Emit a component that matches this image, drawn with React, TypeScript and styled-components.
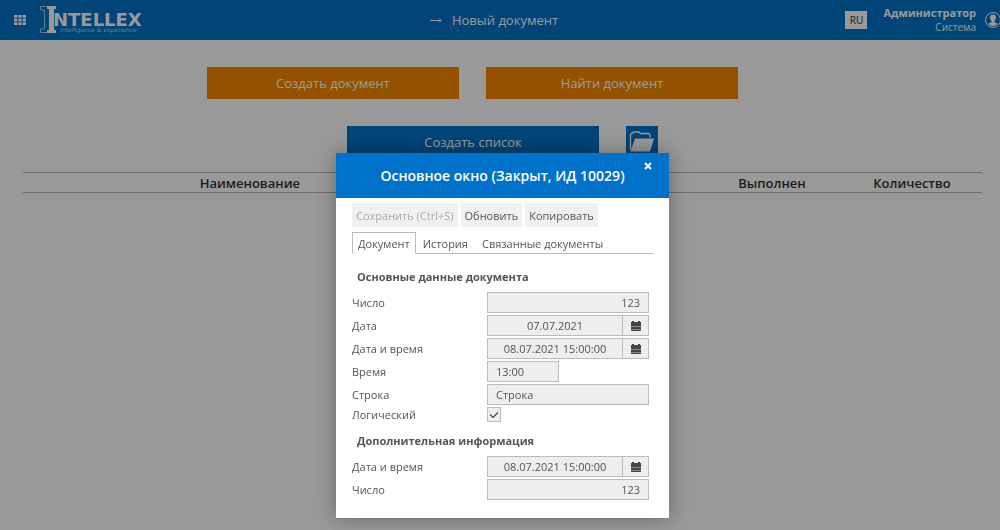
import React from "react";
import styled, { createGlobalStyle } from "styled-components";

const GlobalStyle = createGlobalStyle`
  * { box-sizing: border-box; }
  body {
    margin: 0;
    background: #fff;
    font-family: "Open Sans", "Noto Sans", sans-serif;
    font-size: 13px;
    color: #333;
  }
  button, input { font: inherit; color: inherit; margin: 0; }
`;

const TopBar = styled.header`
  display: grid;
  grid-template-columns: 1fr auto 1fr;
  align-items: center;
  height: 40px;
  background: #0072c9;
  color: #fff;
  overflow: hidden;
`;

const Brand = styled.div`
  display: flex;
  align-items: center;
  gap: 14px;
  padding-left: 14px;
`;

const IconButton = styled.button`
  display: flex;
  padding: 0;
  border: 0;
  background: none;
  color: #fff;
  cursor: pointer;
`;

const PageTitle = styled.h1`
  display: flex;
  align-items: center;
  gap: 10px;
  margin: 0;
  padding-right: 12px;
  font-size: 13px;
  font-weight: 400;
  line-height: 18px;
`;

const Account = styled.div`
  display: flex;
  align-items: center;
  justify-content: flex-end;
`;

const Language = styled.button`
  width: 22px;
  height: 18px;
  margin-right: 16px;
  padding: 0;
  border: 0;
  background: #fff;
  color: #333;
  font-size: 10px;
  line-height: 18px;
`;

const UserName = styled.div`
  margin-right: 9px;
  text-align: right;
  font-size: 10px;
  line-height: 14px;

  strong {
    display: block;
    font-size: 11px;
    font-weight: 700;
  }
`;

const Page = styled.main`
  padding: 27px 18px 0 23px;
`;

const Actions = styled.div<{ $reserve?: boolean }>`
  display: flex;
  justify-content: center;
  gap: 27px;
  margin-bottom: 27px;
  padding-right: ${(p) => (p.$reserve ? 60 : 0)}px;
`;

const ActionButton = styled.button<{ $tone: "orange" | "blue" }>`
  width: 252px;
  height: 32px;
  padding: 0;
  border: 0;
  background: ${(p) => (p.$tone === "orange" ? "#f78900" : "#0072c9")};
  color: #fff;
  cursor: pointer;
`;

const FolderButton = styled(ActionButton)`
  display: flex;
  align-items: center;
  justify-content: center;
  width: 32px;
`;

const ListTable = styled.table`
  width: 100%;
  margin-top: -13px;
  table-layout: fixed;
  border-collapse: collapse;

  th {
    height: 20px;
    padding: 0;
    border-top: 1px solid #bbb;
    border-bottom: 1px solid #bbb;
    font-weight: 600;
    line-height: 18px;
  }
`;

const Backdrop = styled.div`
  position: fixed;
  inset: 0;
  display: flex;
  justify-content: center;
  align-items: flex-start;
  padding: 153px 0 0 5px;
  background: rgba(0, 0, 0, 0.4);
`;

const Dialog = styled.section`
  width: 333px;
  background: #fff;
  color: #555;
  font-size: 11px;
  box-shadow: 0 0 20px rgba(0, 0, 0, 0.35);
`;

const DialogHeader = styled.header`
  position: relative;
  display: flex;
  align-items: center;
  justify-content: center;
  height: 45px;
  background: #0072c9;
  color: #fff;

  h2 {
    margin: 0;
    font-size: 14px;
    font-weight: 600;
  }
`;

const CloseButton = styled(IconButton)`
  position: absolute;
  top: 9px;
  right: 17px;
`;

const DialogBody = styled.div`
  padding: 5px 16px 18px;
`;

const Toolbar = styled.div`
  display: flex;
  gap: 3px;
`;

const ToolButton = styled.button`
  height: 24px;
  padding: 0 4px;
  border: 0;
  background: #f1f1f1;

  &:disabled { color: #aaa; }
`;

const Tabs = styled.div`
  display: flex;
  margin: 5px 0 4px;
  border-bottom: 1px solid #bbb;
`;

const Tab = styled.button<{ $active?: boolean }>`
  height: 22px;
  margin-bottom: -1px;
  border: 1px solid ${(p) => (p.$active ? "#bbb" : "transparent")};
  border-bottom-color: ${(p) => (p.$active ? "#fff" : "transparent")};
  background: ${(p) => (p.$active ? "#fff" : "transparent")};
  padding: 0 ${(p) => (p.$active ? 5 : 6)}px;
`;

const Group = styled.fieldset`
  margin: 0;
  padding: 0;
  border: 0;
  min-width: 0;

  legend {
    padding: 10px 5px 7px;
    font-weight: 700;
    line-height: 17px;
  }
`;

const Fields = styled.div`
  display: grid;
  gap: 2px;
  padding-right: 4px;
`;

const FieldRow = styled.div`
  display: grid;
  grid-template-columns: 135px 1fr;
  align-items: center;

  label { line-height: 15px; }
`;

const TextInput = styled.input<{ $align?: string; $narrow?: boolean }>`
  width: ${(p) => (p.$narrow ? "72px" : "100%")};
  min-width: 0;
  height: 21px;
  padding: 0 8px;
  border: 1px solid #bbb;
  border-radius: 0;
  background: #eee;
  text-align: ${(p) => p.$align || "left"};
  outline: 0;
`;

const DateBox = styled.div`
  display: grid;
  grid-template-columns: 1fr 26px;
`;

const CalendarButton = styled.button`
  display: flex;
  align-items: center;
  justify-content: center;
  padding: 0;
  border: 1px solid #bbb;
  border-left: 0;
  background: #eee;
`;

const CheckBox = styled.input`
  display: block;
  width: 14px;
  height: 15px;
  appearance: none;
  border: 1px solid #bbb;
  background: #eee;
`;

const CheckCell = styled.div`
  display: grid;
  justify-content: start;

  > * { grid-area: 1 / 1; }
  svg { pointer-events: none; }
`;

const AppsIcon = () => (
  <svg width="12" height="10" viewBox="0 0 12 10" fill="currentColor" aria-hidden="true">
    {[0, 3.7, 7.3].map((y) => [0, 4.3, 8.6].map((x) => <rect key={`${x}-${y}`} x={x} y={y} width="3.4" height="2.7" />))}
  </svg>
);

const Logo = () => (
  <svg width="104" height="28" viewBox="0 0 104 28" role="img" aria-label="Intellex">
    <path d="M7 .5H.5V4H4.500V23H.5V26.500H7" fill="none" stroke="#a9cdea" />
    <path d="M7 0h9v3h-2v21h2v3H7v-3h2V3H7Z" fill="#fff" />
    <text x="13" y="20" fill="#fff" fontFamily="DejaVu Sans" fontSize="18" fontWeight="700">NTELLEX</text>
    <text x="20" y="26" fill="#a9cdea" fontFamily="DejaVu Sans" fontSize="6">intelligence &amp; experience</text>
  </svg>
);

const ArrowIcon = () => (
  <svg width="12" height="7" viewBox="0 0 12 7" fill="none" stroke="currentColor" aria-hidden="true">
    <path d="M0 3.500h11M9 1.500l2 2-2 2" />
  </svg>
);

const UserIcon = () => (
  <svg width="15" height="16" viewBox="0 0 15 16" aria-hidden="true">
    <circle cx="8" cy="8" r="7.500" fill="none" stroke="#fff" />
    <path d="M8 2.500c2 0 3 1.300 3 3 0 1.600-.7 2.700-1.500 3.500v1.200l3.500 1.600A6.500 6.500 0 0 1 3 11.800l3.500-1.600V9C5.700 8.200 5 7.100 5 5.500c0-1.700 1-3 3-3Z" fill="#fff" />
  </svg>
);

const FolderIcon = () => (
  <svg width="26" height="22" viewBox="0 0 26 22" aria-hidden="true">
    <path d="M1.500 19V3.500L3 2h1l1-1h5l1.500 1.500H20l1 1v3" fill="none" stroke="#fff" strokeWidth="1.300" />
    <path d="M6 7.500h19L21 20.500H1.500Z" fill="#fff" />
  </svg>
);

const CloseIcon = () => (
  <svg width="8" height="8" viewBox="0 0 8 8" stroke="#fff" strokeWidth="2" aria-hidden="true">
    <path d="m1 1 6 6M7 1 1 7" />
  </svg>
);

const CalendarIcon = () => (
  <svg width="10" height="10" viewBox="0 0 10 10" aria-hidden="true">
    <path d="M0 1h1V0h2v1h4V0h2v1h1v4H0Z" fill="#444" />
    <path d="M0 5h10v1H0ZM0 8h10v1H0Z" fill="#888" />
    <path d="M0 6h10v2H0ZM0 9h10v1H0Z" fill="#444" />
  </svg>
);

const CheckIcon = () => (
  <svg width="14" height="15" viewBox="0 0 14 15" fill="none" stroke="#444" strokeWidth="1.200" aria-hidden="true">
    <path d="m3 7.500 3 3L11 5.500" />
  </svg>
);

type FieldProps = { id: string; label: string; value: string; align?: string; narrow?: boolean };

const Field = ({ id, label, value, align, narrow }: FieldProps) => (
  <FieldRow>
    <label htmlFor={id}>{label}</label>
    <TextInput id={id} defaultValue={value} $align={align} $narrow={narrow} readOnly />
  </FieldRow>
);

const DateField = ({ id, label, value }: FieldProps) => (
  <FieldRow>
    <label htmlFor={id}>{label}</label>
    <DateBox>
      <TextInput id={id} defaultValue={value} $align="center" readOnly />
      <CalendarButton type="button" aria-label="Календарь"><CalendarIcon /></CalendarButton>
    </DateBox>
  </FieldRow>
);

export default function App() {
  return (
    <>
      <GlobalStyle />
      <TopBar>
        <Brand>
          <IconButton type="button" aria-label="Меню"><AppsIcon /></IconButton>
          <Logo />
        </Brand>
        <PageTitle><ArrowIcon />Новый документ</PageTitle>
        <Account>
          <Language type="button">RU</Language>
          <UserName><strong>Администратор</strong>Система</UserName>
          <UserIcon />
        </Account>
      </TopBar>
      <Page>
        <Actions $reserve>
          <ActionButton type="button" $tone="orange">Создать документ</ActionButton>
          <ActionButton type="button" $tone="orange">Найти документ</ActionButton>
        </Actions>
        <Actions>
          <ActionButton type="button" $tone="blue">Создать список</ActionButton>
          <FolderButton type="button" $tone="blue" aria-label="Открыть"><FolderIcon /></FolderButton>
        </Actions>
        <ListTable>
          <colgroup>
            <col style={{ width: "47.3%" }} />
            <col />
            <col style={{ width: "14.6%" }} />
            <col style={{ width: "14.6%" }} />
          </colgroup>
          <thead>
            <tr>
              <th scope="col">Наименование</th>
              <th />
              <th scope="col">Выполнен</th>
              <th scope="col">Количество</th>
            </tr>
          </thead>
        </ListTable>
      </Page>
      <Backdrop>
        <Dialog role="dialog" aria-modal="true" aria-labelledby="dialog-title">
          <DialogHeader>
            <h2 id="dialog-title">Основное окно (Закрыт, ИД 10029)</h2>
            <CloseButton type="button" aria-label="Закрыть"><CloseIcon /></CloseButton>
          </DialogHeader>
          <DialogBody>
            <Toolbar>
              <ToolButton type="button" disabled>Сохранить (Ctrl+S)</ToolButton>
              <ToolButton type="button">Обновить</ToolButton>
              <ToolButton type="button">Копировать</ToolButton>
            </Toolbar>
            <Tabs role="tablist">
              <Tab type="button" role="tab" aria-selected="true" $active>Документ</Tab>
              <Tab type="button" role="tab" aria-selected="false">История</Tab>
              <Tab type="button" role="tab" aria-selected="false">Связанные документы</Tab>
            </Tabs>
            <Group>
              <legend>Основные данные документа</legend>
              <Fields>
                <Field id="number" label="Число" value="123" align="right" />
                <DateField id="date" label="Дата" value="07.07.2021" />
                <DateField id="datetime" label="Дата и время" value="08.07.2021 15:00:00" />
                <Field id="time" label="Время" value="13:00" narrow />
                <Field id="string" label="Строка" value="Строка" />
                <FieldRow>
                  <label htmlFor="logical">Логический</label>
                  <CheckCell>
                    <CheckBox id="logical" type="checkbox" defaultChecked />
                    <CheckIcon />
                  </CheckCell>
                </FieldRow>
              </Fields>
            </Group>
            <Group>
              <legend>Дополнительная информация</legend>
              <Fields>
                <DateField id="extra-datetime" label="Дата и время" value="08.07.2021 15:00:00" />
                <Field id="extra-number" label="Число" value="123" align="right" />
              </Fields>
            </Group>
          </DialogBody>
        </Dialog>
      </Backdrop>
    </>
  );
}
